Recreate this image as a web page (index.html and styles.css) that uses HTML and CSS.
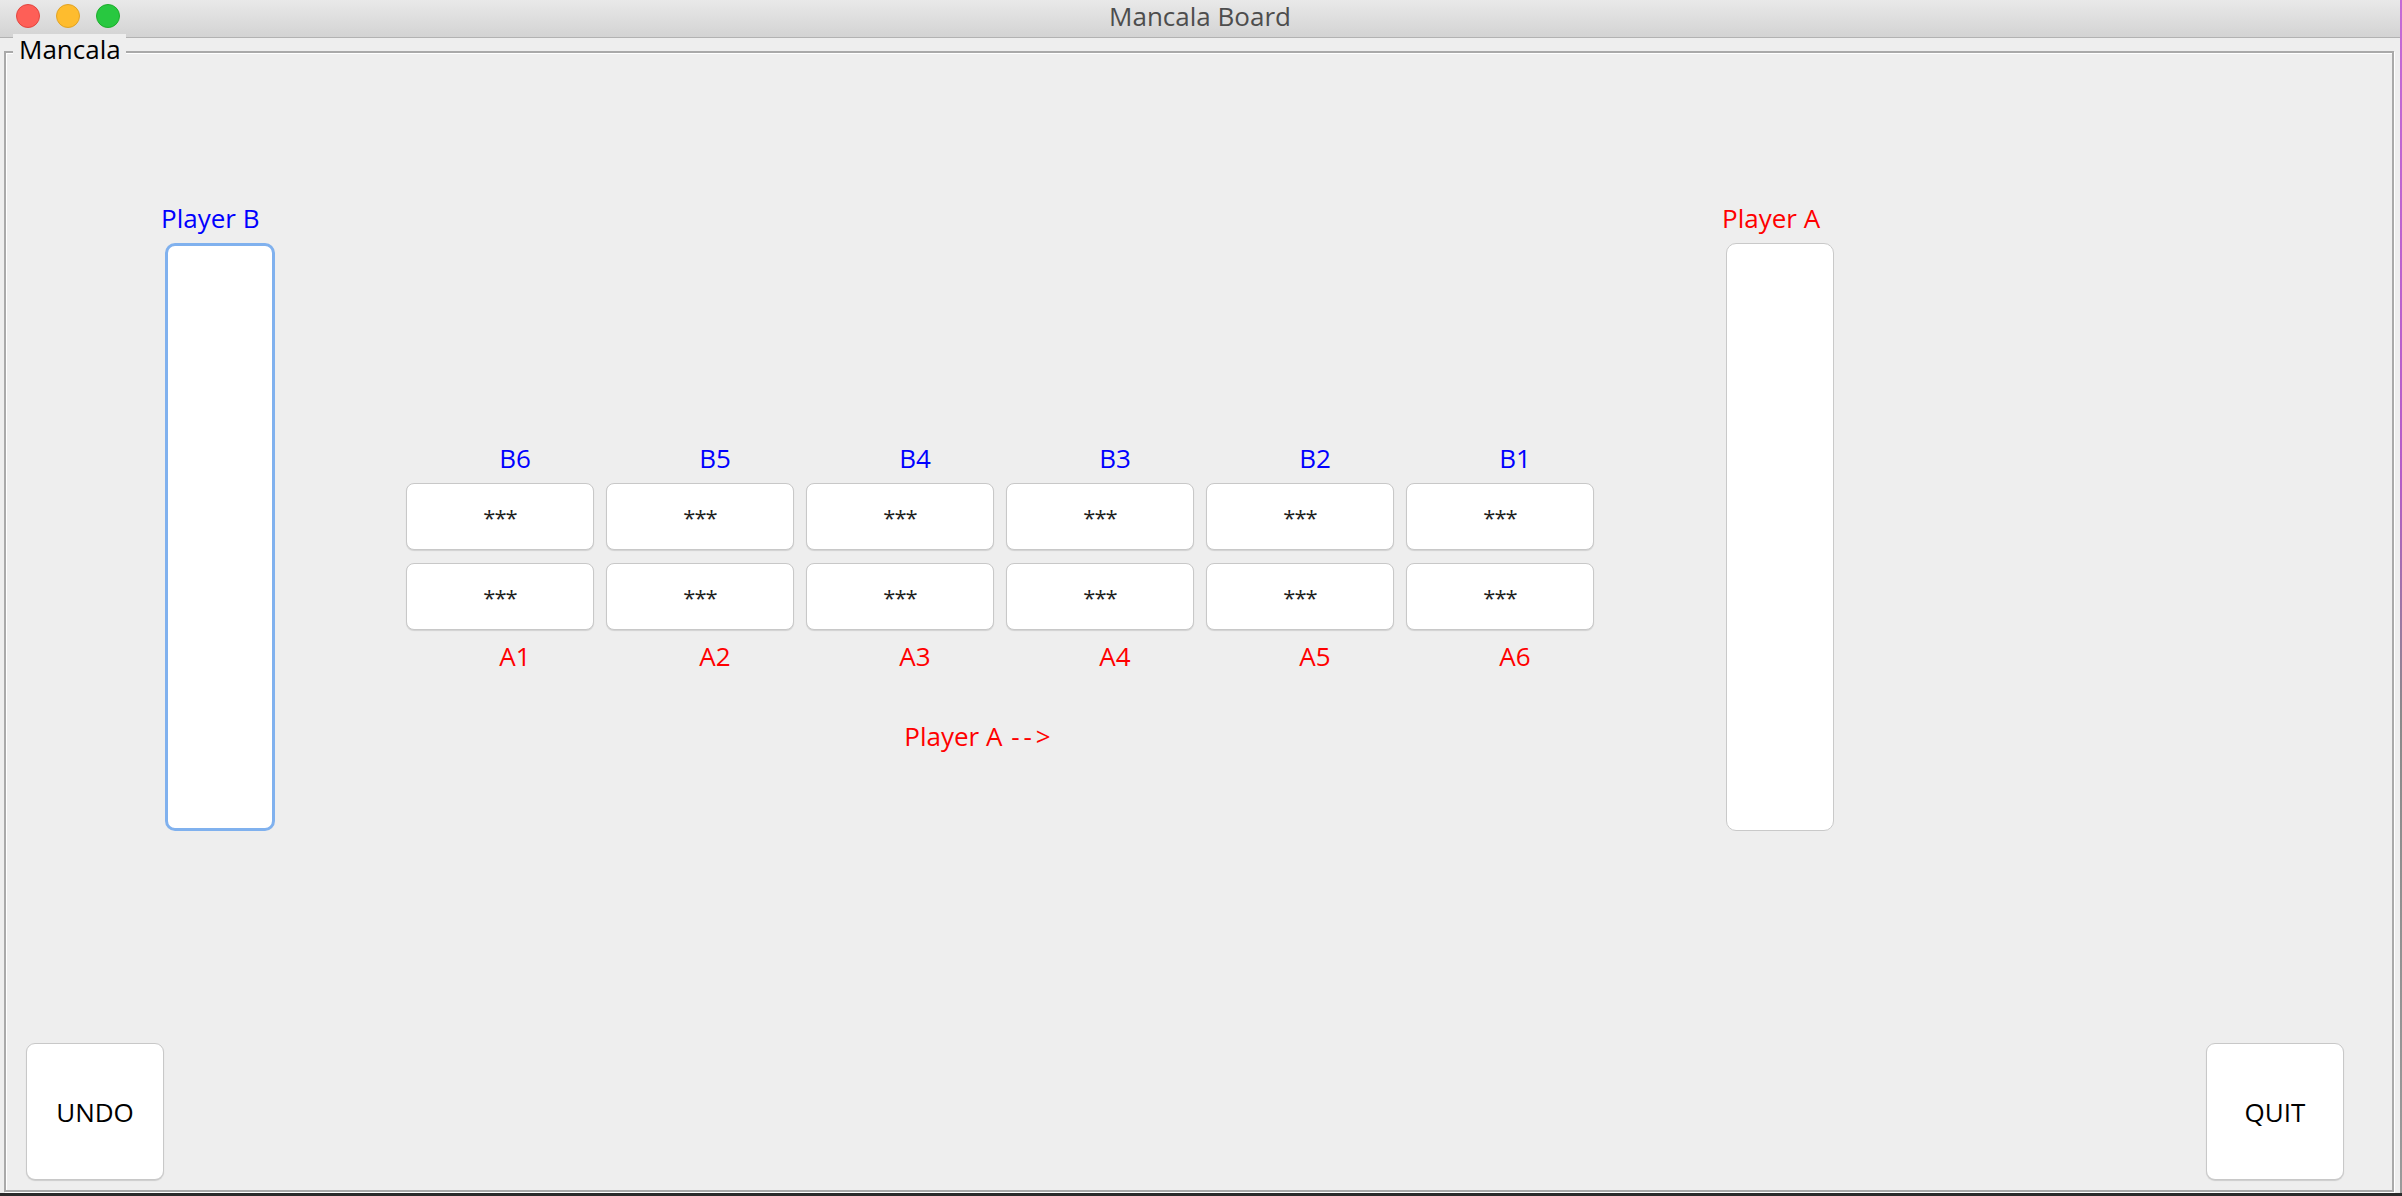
FILE: index.html
```html
<!DOCTYPE html>
<html lang="en">
<head>
<meta charset="utf-8">
<title>Mancala Board</title>
<link rel="stylesheet" href="styles.css">
</head>
<body>
<div class="screen">
  <div class="window">
    <header class="titlebar">
      <div class="lights">
        <span class="light red"></span>
        <span class="light yellow"></span>
        <span class="light green"></span>
      </div>
      <div class="title">Mancala Board</div>
      <div class="spacer"></div>
    </header>
    <main class="body">
      <section class="group">
        <span class="legend">Mancala</span>
        <div class="board">
          <div class="store store-b">
            <div class="store-label blue">Player B</div>
            <div class="store-box focused"></div>
          </div>
          <div class="pits">
            <div class="pit-labels blue"><span>B6</span><span>B5</span><span>B4</span><span>B3</span><span>B2</span><span>B1</span></div>
            <div class="pit-row">
              <button class="pit">***</button><button class="pit">***</button><button class="pit">***</button><button class="pit">***</button><button class="pit">***</button><button class="pit">***</button>
            </div>
            <div class="pit-row second">
              <button class="pit">***</button><button class="pit">***</button><button class="pit">***</button><button class="pit">***</button><button class="pit">***</button><button class="pit">***</button>
            </div>
            <div class="pit-labels red lower"><span>A1</span><span>A2</span><span>A3</span><span>A4</span><span>A5</span><span>A6</span></div>
            <div class="turn red">Player A <span class="arrow">--&gt;</span></div>
          </div>
          <div class="store store-a">
            <div class="store-label red">Player A</div>
            <div class="store-box"></div>
          </div>
        </div>
        <div class="controls">
          <button class="cmd">UNDO</button>
          <button class="cmd">QUIT</button>
        </div>
      </section>
    </main>
  </div>
  <div class="desk-edge"></div>
</div>
<div class="desk-bottom"></div>
</body>
</html>
```

FILE: styles.css
```css
* { box-sizing: border-box; }

html, body {
  margin: 0;
  padding: 0;
}

body {
  width: 2402px;
  height: 1196px;
  overflow: hidden;
  background: #eeeeee;
  font-family: "Open Sans", "Noto Sans", sans-serif;
  display: flex;
  flex-direction: column;
}

.screen {
  display: flex;
  height: 1193px;
}

.window {
  width: 2400px;
  height: 1193px;
  display: flex;
  flex-direction: column;
  background: #eeeeee;
}

.desk-edge {
  width: 2px;
  background: linear-gradient(#c46ad6, #b45cc8 40%, #8a8a8a 60%, #9a9a9a);
}

.desk-bottom {
  height: 3px;
  background: #2a2a2a;
}

/* Title bar */
.titlebar {
  height: 38px;
  border-bottom: 1px solid #b2b2b2;
  background: linear-gradient(#e9e9e9, #d3d3d3);
  display: grid;
  grid-template-columns: 1fr auto 1fr;
  align-items: start;
}

.lights {
  display: flex;
  gap: 16px;
  padding: 4px 0 0 16px;
}

.light {
  width: 24px;
  height: 24px;
  border-radius: 50%;
  display: block;
}

.light.red { background: #fe5f57; border: 1px solid #e2463f; }
.light.yellow { background: #febc2e; border: 1px solid #e1a325; }
.light.green { background: #28c840; border: 1px solid #1dad2b; }

.title {
  font-size: 26px;
  line-height: 33px;
  color: #4d4d4d;
}

/* Body */
.body {
  flex: 1;
  padding: 13px 6px 1px 4px;
  display: flex;
}

.group {
  position: relative;
  flex: 1;
  border: 2px solid #a9a9a9;
  box-shadow: inset 1px 1px 0 #ffffff, 1px 1px 0 #ffffff;
  display: flex;
  flex-direction: column;
}

.legend {
  position: absolute;
  top: -19px;
  left: 7px;
  padding: 0 5px 0 6px;
  background: #eeeeee;
  font-size: 26px;
  line-height: 30px;
  color: #000;
}

.blue { color: #0000ff; }
.red { color: #ff0000; }

.board {
  display: flex;
  align-items: flex-start;
  padding: 150px 0 0 155px;
}

.store {
  display: flex;
  flex-direction: column;
}

.store-label {
  font-size: 26px;
  line-height: 30px;
  white-space: nowrap;
}

.store-box {
  margin: 10px 0 0 4px;
  height: 588px;
  background: #ffffff;
  border-radius: 10px;
}

.store-b .store-box {
  width: 110px;
  border: 3px solid #80b1ee;
}

.store-a {
  margin-left: 128px;
}

.store-a .store-box {
  width: 108px;
  border: 1px solid #c9c9c9;
}

.pits {
  margin: 240px 0 0 131px;
  width: 1188px;
  display: flex;
  flex-direction: column;
}

.pit-labels {
  display: grid;
  grid-template-columns: repeat(6, 188px);
  column-gap: 12px;
  font-size: 26px;
  line-height: 30px;
}

.pit-labels span {
  padding-left: 30px;
  text-align: center;
}

.pit-labels.lower {
  margin-top: 11px;
}

.pit-row {
  display: grid;
  grid-template-columns: repeat(6, 188px);
  column-gap: 12px;
  margin-top: 10px;
}

.pit-row.second {
  margin-top: 13px;
}

.pit {
  height: 67px;
  margin: 0;
  padding: 0;
  background: #ffffff;
  border: 1px solid #c8c8c8;
  border-radius: 8px;
  box-shadow: 0 1px 1px rgba(0, 0, 0, 0.12);
  font-family: "Open Sans", "Noto Sans", sans-serif;
  font-size: 22px;
  color: #1e1e1e;
  letter-spacing: -1px;
}

.turn {
  margin-top: 50px;
  padding-right: 41px;
  text-align: center;
  font-size: 26px;
  line-height: 30px;
}

.arrow {
  letter-spacing: 4px;
  margin-left: 2px;
}

.controls {
  margin-top: auto;
  display: flex;
  justify-content: space-between;
  padding: 0 48px 10px 20px;
}

.cmd {
  width: 138px;
  height: 137px;
  margin: 0;
  padding: 0;
  background: #ffffff;
  border: 1px solid #c8c8c8;
  border-radius: 9px;
  box-shadow: 0 1px 1px rgba(0, 0, 0, 0.14);
  font-family: "Open Sans", "Noto Sans", sans-serif;
  font-size: 26px;
  color: #000;
}
```
